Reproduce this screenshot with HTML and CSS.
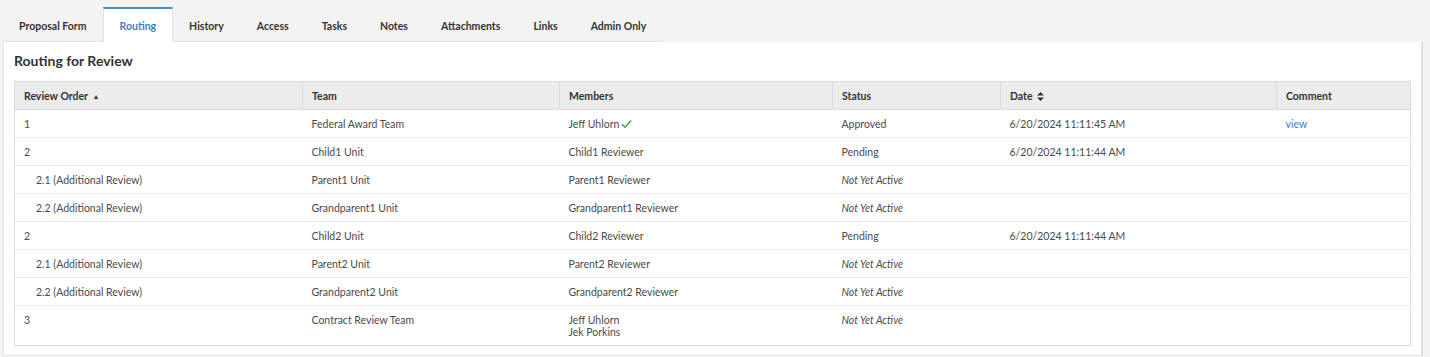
FILE: index.html
```html
<!DOCTYPE html>
<html lang="en">
<head>
  <meta charset="UTF-8">
  <meta name="viewport" content="width=device-width, initial-scale=1.0">
  <title>Routing for Review</title>
  <link rel="stylesheet" href="styles.css">
</head>
<body>

<div class="page">
  <ul class="tabs">
    <li class="tab">Proposal Form</li>
    <li class="tab active">Routing</li>
    <li class="tab">History</li>
    <li class="tab">Access</li>
    <li class="tab">Tasks</li>
    <li class="tab">Notes</li>
    <li class="tab">Attachments</li>
    <li class="tab">Links</li>
    <li class="tab">Admin Only</li>
  </ul>

  <div class="panel">
    <h2>Routing for Review</h2>
    <table class="routing">
      <thead>
        <tr>
          <th class="col-order">Review Order <span class="sort">&#9650;</span></th>
          <th class="col-team">Team</th>
          <th class="col-members">Members</th>
          <th class="col-status">Status</th>
          <th class="col-date">Date <svg class="sort-both" width="7" height="9" viewBox="0 0 7 9"><path d="M3.5 0 L7 3.6 L0 3.6 Z M3.5 9 L7 5.4 L0 5.4 Z" fill="#333"/></svg></th>
          <th>Comment</th>
        </tr>
      </thead>
      <tbody>
        <tr>
          <td>1</td>
          <td>Federal Award Team</td>
          <td>Jeff Uhlorn<svg class="check" width="11" height="10" viewBox="0 0 11 10"><path d="M1 5.2 L4 8.2 L10 1.5" fill="none" stroke="#3a9a46" stroke-width="1.3"/></svg></td>
          <td>Approved</td>
          <td>6/20/2024 11:11:45 AM</td>
          <td><a href="#">view</a></td>
        </tr>
        <tr>
          <td>2</td>
          <td>Child1 Unit</td>
          <td>Child1 Reviewer</td>
          <td>Pending</td>
          <td>6/20/2024 11:11:44 AM</td>
          <td></td>
        </tr>
        <tr class="sub">
          <td>2.1 (Additional Review)</td>
          <td>Parent1 Unit</td>
          <td>Parent1 Reviewer</td>
          <td class="inactive">Not Yet Active</td>
          <td></td>
          <td></td>
        </tr>
        <tr class="sub">
          <td>2.2 (Additional Review)</td>
          <td>Grandparent1 Unit</td>
          <td>Grandparent1 Reviewer</td>
          <td class="inactive">Not Yet Active</td>
          <td></td>
          <td></td>
        </tr>
        <tr>
          <td>2</td>
          <td>Child2 Unit</td>
          <td>Child2 Reviewer</td>
          <td>Pending</td>
          <td>6/20/2024 11:11:44 AM</td>
          <td></td>
        </tr>
        <tr class="sub">
          <td>2.1 (Additional Review)</td>
          <td>Parent2 Unit</td>
          <td>Parent2 Reviewer</td>
          <td class="inactive">Not Yet Active</td>
          <td></td>
          <td></td>
        </tr>
        <tr class="sub">
          <td>2.2 (Additional Review)</td>
          <td>Grandparent2 Unit</td>
          <td>Grandparent2 Reviewer</td>
          <td class="inactive">Not Yet Active</td>
          <td></td>
          <td></td>
        </tr>
        <tr class="last">
          <td>3</td>
          <td>Contract Review Team</td>
          <td>Jeff Uhlorn<br>Jek Porkins</td>
          <td class="inactive">Not Yet Active</td>
          <td></td>
          <td></td>
        </tr>
      </tbody>
    </table>
  </div>
</div>

</body>
</html>
```

FILE: styles.css
```css
body {
    font-family: Lato, "Open Sans", sans-serif;
    background-color: #f3f3f3;
    margin: 0;
    padding: 0;
    color: #4a4a4a;
    font-size: 10.5px;
}

.page {
    padding: 8px 7px 0 3px;
}

.tabs {
    list-style: none;
    margin: 0;
    padding: 0;
    display: flex;
    width: fit-content;
    border-bottom: 1px solid #e2e2e2;
    height: 33px;
}

.tab {
    padding: 0 16.5px;
    font-weight: bold;
    color: #333;
    line-height: 34px;
    white-space: nowrap;
    border-top: 2px solid transparent;
    margin-top: -1px;
}

.tab:first-child {
    padding-left: 16px;
}

.tab.active {
    background-color: #fff;
    color: #3f7dbf;
    border-top-color: #4a8ccc;
    border-left: 1px solid #e2e2e2;
    border-right: 1px solid #e2e2e2;
    padding: 0 15.5px;
    height: 33px;
    margin-bottom: -1px;
}

.panel {
    background-color: #fff;
    border: 1px solid #e4e4e4;
    border-right: 2px solid #e0e0e0;
    border-top: none;
    padding: 10px 10px 9px 10px;
}

h2 {
    margin: 0 0 11px 0;
    font-size: 14px;
    font-weight: bold;
    color: #333;
    line-height: 18px;
}

.routing {
    width: 100%;
    border-collapse: collapse;
    border: 1px solid #dcdcdc;
}

.routing th {
    background-color: #ececec;
    text-align: left;
    font-weight: bold;
    color: #333;
    height: 27px;
    padding: 0 9px;
    border: 1px solid #dcdcdc;
}

.col-order { width: 269px; }
.col-team { width: 238px; }
.col-members { width: 254px; }
.col-status { width: 149px; }
.col-date { width: 257px; }

.sort {
    font-size: 7px;
    position: relative;
    top: -1px;
    margin-left: 2px;
}

.sort-both {
    vertical-align: -1px;
    margin-left: 2px;
}

.routing td {
    padding: 8px 9px 7px 9px;
    line-height: 12px;
    border-bottom: 1px solid #e9e9e9;
    vertical-align: top;
}

.routing tr.sub td:first-child {
    padding-left: 21px;
}

.routing tr.last td {
    padding-bottom: 7px;
    border-bottom: none;
}

.inactive {
    font-style: italic;
}

.check {
    margin-left: 2px;
    vertical-align: -1px;
}

a {
    color: #3f7dbf;
    text-decoration: none;
}
```
